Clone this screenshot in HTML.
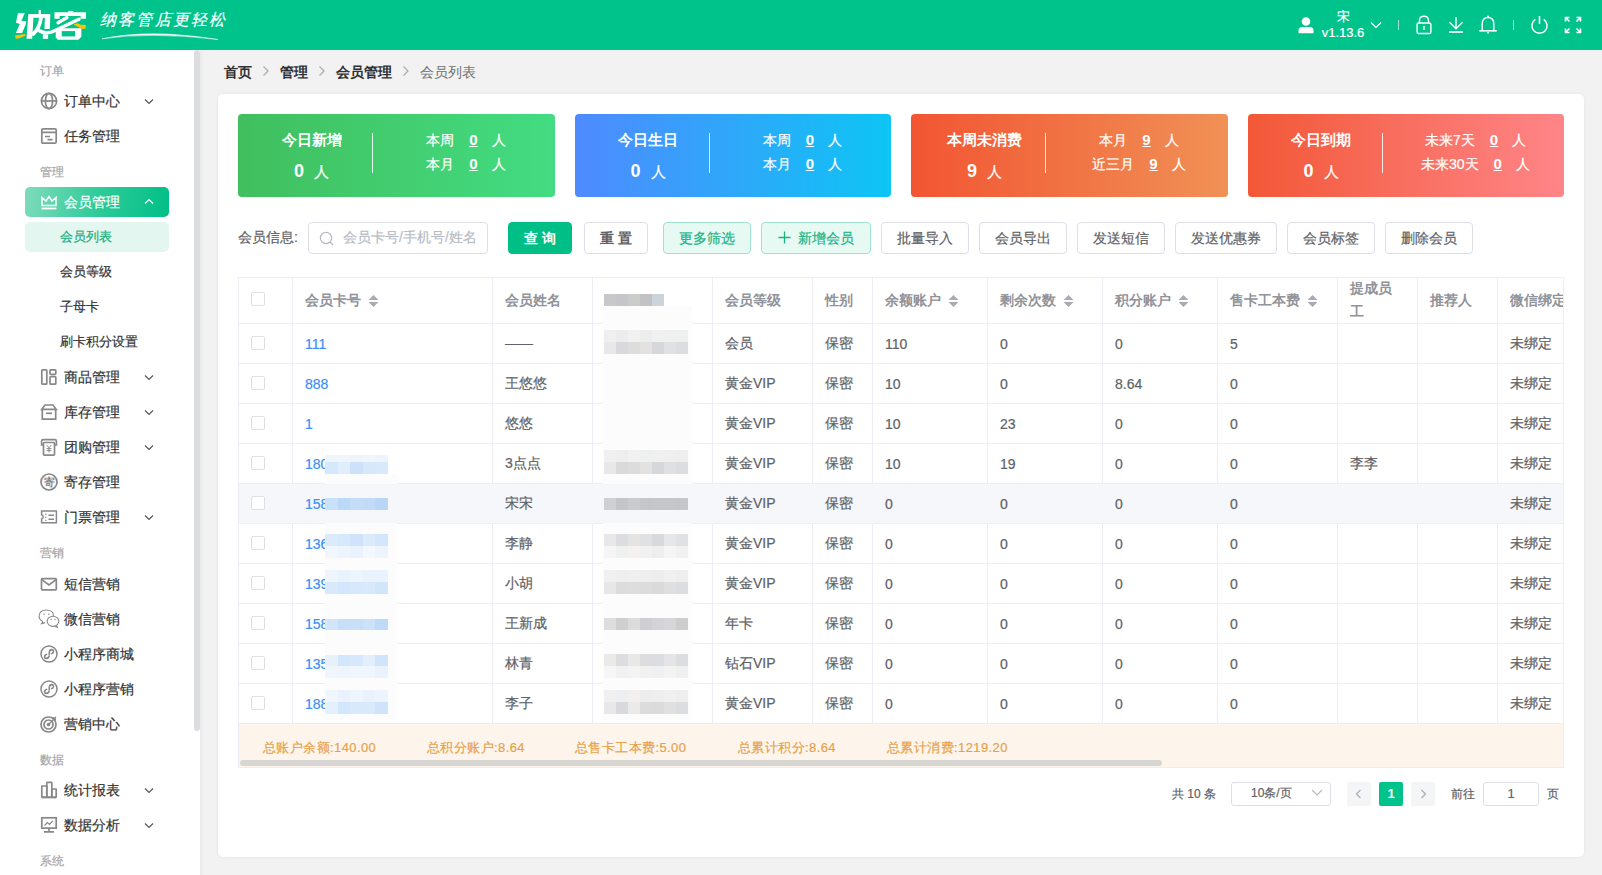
<!DOCTYPE html><html><head><meta charset="utf-8"><title>会员列表</title><style>
*{box-sizing:border-box;margin:0;padding:0}
html,body{width:1602px;height:875px;overflow:hidden}
body{position:relative;background:#f2f2f2;font-family:"Liberation Sans",sans-serif;font-size:14px;color:#333;-webkit-text-stroke:0.2px currentColor}
.a{position:absolute}
[style*="font-weight:bold"],b,.bc,.th{-webkit-text-stroke:0}
.hdr{left:0;top:0;width:1602px;height:50px;background:#00c28b}
.side{left:0;top:50px;width:200px;height:825px;background:#fff}
.thumb{left:194px;top:50px;width:6px;height:681px;background:#dcdde0;border-radius:3px}
.lbl{font-size:12px;color:#a6a6a6;line-height:14px;white-space:nowrap}
.mi{font-size:14px;color:#333;line-height:16px;white-space:nowrap}
.ic{stroke:#888;fill:none;stroke-width:1.7}
.chev{stroke:#555;fill:none;stroke-width:1.2}
.card{left:218px;top:94px;width:1366px;height:763px;background:#fff;border-radius:5px;box-shadow:0 0 4px rgba(0,0,0,.06)}
.stat{top:114px;width:316.5px;height:83px;border-radius:4px;color:#fff}
.bc{top:64px;font-size:14px;line-height:16px;white-space:nowrap;color:#303133;font-weight:bold}
.btn{top:222px;height:32px;border:1px solid #dcdfe6;border-radius:4px;background:#fff;color:#606266;font-size:14px;line-height:30px;text-align:center;white-space:nowrap}
.btng{background:#e7f9f3;border-color:#9ee3cc;color:#18b383}
.tb{left:238px;top:277px;width:1326px;height:491px;border:1px solid #ebeef5;overflow:hidden}
.th{font-size:14px;font-weight:bold;color:#909399;white-space:nowrap;line-height:16px}
.td{font-size:14px;color:#606266;white-space:nowrap;line-height:16px}
.vl{top:0;width:1px;background:#ebeef5}
.hl{left:0;height:1px;background:#ebeef5}
.cb{width:14px;height:14px;border:1px solid #dcdfe6;border-radius:2px;background:#fff}
.link{color:#3d8ff5}
.sum{font-size:13px;color:#e8a14a;white-space:nowrap;line-height:16px;letter-spacing:.4px}
</style></head><body>
<div class="a hdr"></div>
<svg class="a" style="left:10px;top:5px" width="85" height="40" viewBox="0 0 1602 754">
<g fill="#fff">
<polygon points="150,152 278,152 215,300 302,300 300,358 228,528 110,528 185,358 112,335"/>
<polygon points="345,168 760,168 752,452 650,452 656,238 442,238 418,638 310,638"/>
<rect x="540" y="92" width="42" height="160"/>
<rect x="618" y="552" width="100" height="86"/>
<rect x="1100" y="112" width="92" height="60"/>
<polygon points="838,138 1432,138 1432,258 1330,258 1330,205 935,205 935,258 838,258"/>
<polygon points="862,440 1345,440 1345,600 1290,655 900,655 862,610"/>
</g>
<rect x="975" y="492" width="252" height="100" fill="#00c28b"/>
<g fill="none" stroke="#fff" stroke-linecap="round">
<path d="M585 240 Q560 430 440 545" stroke-width="70"/>
<path d="M545 480 Q680 570 850 480 L1300 268" stroke-width="66"/>
<path d="M905 335 L1075 235" stroke-width="62"/>
</g>
<g fill="#f9c20a">
<polygon points="95,575 282,545 292,578 200,618 108,642"/>
<polygon points="1198,368 1268,345 1332,372 1432,378 1422,448 1362,452 1290,420"/>
</g>
</svg>
<div class="a" style="left:100px;top:9px;font-size:16px;line-height:22px;color:#fff;font-family:'Liberation Serif',serif;letter-spacing:2.2px;font-style:italic;white-space:nowrap">纳客管店更轻松</div>
<svg class="a" style="left:100px;top:29px" width="130" height="12"><path d="M2 9.8 Q50 -0.5 118 10.5 Q50 2.6 2 9.8 Z" fill="#fff" stroke="#fff" stroke-width=".5" opacity=".95"/></svg>
<svg class="a" style="left:1297px;top:16px" width="18" height="18"><circle cx="9" cy="5.5" r="4.3" fill="#fff"/><path d="M1.5 17.2 V14.5 Q1.5 11 5 11 H13 Q16.5 11 16.5 14.5 V17.2 Z" fill="#fff"/></svg>
<div class="a" style="left:1320px;top:8.5px;width:46px;text-align:center;color:#fff;font-size:13px;line-height:15px">宋</div>
<div class="a" style="left:1320px;top:25px;width:46px;text-align:center;color:#fff;font-size:13px;line-height:16px">v1.13.6</div>
<svg class="a" style="left:1370px;top:21px" width="12" height="8"><path d="M1 1.5 L6 6.5 L11 1.5" stroke="#fff" stroke-width="1.2" fill="none"/></svg>
<div class="a" style="left:1398px;top:20px;width:1px;height:10px;background:rgba(255,255,255,.6)"></div>
<div class="a" style="left:1513px;top:20px;width:1px;height:10px;background:rgba(255,255,255,.6)"></div>
<svg class="a" style="left:1415px;top:15px" width="18" height="20"><path d="M4.5 8 V5.5 Q4.5 1.3 9 1.3 Q13.5 1.3 13.5 5.5 V8" stroke="#fff" stroke-width="1.4" fill="none"/><rect x="2.1" y="8" width="13.8" height="10.5" rx="1.6" stroke="#fff" stroke-width="1.4" fill="none"/><path d="M9 10.8 V15" stroke="#fff" stroke-width="1.4"/></svg>
<svg class="a" style="left:1448px;top:15px" width="16" height="20"><path d="M8 2 V14 M1.5 7.3 L8 13.8 L14.5 7.3" stroke="#fff" stroke-width="1.4" fill="none"/><path d="M1 17 H15" stroke="#fff" stroke-width="1.6"/></svg>
<svg class="a" style="left:1478px;top:15px" width="20" height="20"><path d="M4.2 15.5 V9 Q4.2 2.5 10 2.5 Q15.8 2.5 15.8 9 V15.5" stroke="#fff" stroke-width="1.4" fill="none"/><path d="M1.3 15.8 H18.7" stroke="#fff" stroke-width="1.6"/><path d="M8.6 17.3 H11.4 L10 19 Z" fill="#fff"/><circle cx="10" cy="1.6" r="1" fill="#fff"/></svg>
<svg class="a" style="left:1530px;top:15px" width="19" height="20"><path d="M5.3 4.3 A7.6 7.6 0 1 0 13.7 4.3" stroke="#fff" stroke-width="1.5" fill="none"/><path d="M9.5 1 V8.8" stroke="#fff" stroke-width="1.6"/></svg>
<svg class="a" style="left:1564px;top:16px" width="18" height="18"><g stroke="#fff" stroke-width="1.6" fill="none"><path d="M1.5 5.5 V1.5 H5.5 M1.5 1.5 L5.5 5.5"/><path d="M16.5 5.5 V1.5 H12.5 M16.5 1.5 L12.5 5.5"/><path d="M1.5 12.5 V16.5 H5.5 M1.5 16.5 L5.5 12.5"/><path d="M16.5 12.5 V16.5 H12.5 M16.5 16.5 L12.5 12.5"/></g></svg>
<div class="a side"></div>
<div class="a thumb"></div>
<div class="a lbl" style="left:40px;top:64px">订单</div>
<svg class="a ic" style="left:40px;top:92px" width="18" height="18" viewBox="0 0 18 18"><circle cx="9" cy="9" r="7.6"/><ellipse cx="9" cy="9" rx="3.6" ry="7.6"/><path d="M1.4 9 H16.6"/></svg>
<div class="a mi" style="left:64px;top:93px">订单中心</div>
<svg class="a" style="left:144px;top:98px" width="10" height="7"><path d="M1 1.5 L5 5.5 L9 1.5" stroke="#555" stroke-width="1.2" fill="none"/></svg>
<svg class="a ic" style="left:40px;top:127px" width="18" height="18" viewBox="0 0 18 18"><rect x="1.8" y="1.8" width="14.4" height="14.4" rx="1.3"/><path d="M1.8 5.3 H16.2 M5 9.5 H10 M7.5 12.7 H12.5"/></svg>
<div class="a mi" style="left:64px;top:128px">任务管理</div>
<div class="a lbl" style="left:40px;top:165px">管理</div>
<div class="a" style="left:25px;top:187px;width:144px;height:30px;border-radius:5px;background:linear-gradient(100deg,#7fdbbb 0%,#2fcb99 50%,#00bf86 100%)"></div>
<svg class="a" style="left:40px;top:193px" width="18" height="18" viewBox="0 0 18 18"><path d="M2 12.5 V4.5 L6 8 L9 3.5 L12 8 L16 4.5 V12.5 Z" stroke="#fff" stroke-width="1.5" fill="none"/><path d="M1.5 15.5 H16.5" stroke="#fff" stroke-width="1.8"/></svg>
<div class="a mi" style="left:64px;top:194px;color:#fff">会员管理</div>
<svg class="a" style="left:144px;top:198px" width="10" height="7"><path d="M1 5.5 L5 1.5 L9 5.5" stroke="#fff" stroke-width="1.2" fill="none"/></svg>
<div class="a" style="left:25px;top:222px;width:144px;height:30px;border-radius:5px;background:#e3f7f0"></div>
<div class="a mi" style="left:60px;top:229px;color:#1aad80;font-size:13px">会员列表</div>
<div class="a mi" style="left:60px;top:264px;font-size:13px">会员等级</div>
<div class="a mi" style="left:60px;top:299px;font-size:13px">子母卡</div>
<div class="a mi" style="left:60px;top:334px;font-size:13px">刷卡积分设置</div>
<svg class="a ic" style="left:40px;top:368px" width="18" height="18" viewBox="0 0 18 18"><rect x="1.8" y="1.8" width="5" height="14.4" rx=".8"/><rect x="10" y="1.8" width="5.8" height="4.5" rx=".8"/><rect x="10" y="8.6" width="5.8" height="7.6" rx=".8"/></svg>
<div class="a mi" style="left:64px;top:369px">商品管理</div>
<svg class="a" style="left:144px;top:374px" width="10" height="7"><path d="M1 1.5 L5 5.5 L9 1.5" stroke="#555" stroke-width="1.2" fill="none"/></svg>
<svg class="a ic" style="left:40px;top:403px" width="18" height="18" viewBox="0 0 18 18"><path d="M1.8 6.3 L5 2 H13 L16.2 6.3 Z"/><path d="M2.3 6.3 V16.2 H15.7 V6.3"/><path d="M6 10.3 H12"/></svg>
<div class="a mi" style="left:64px;top:404px">库存管理</div>
<svg class="a" style="left:144px;top:409px" width="10" height="7"><path d="M1 1.5 L5 5.5 L9 1.5" stroke="#555" stroke-width="1.2" fill="none"/></svg>
<svg class="a ic" style="left:40px;top:438px" width="18" height="18" viewBox="0 0 18 18"><path d="M3.5 7 H1.6 V3.2 Q1.6 1.6 3.2 1.6 H14.8 Q16.4 1.6 16.4 3.2 V7 H14.5"/><rect x="3.5" y="4.5" width="11" height="12.6" rx=".8"/><path d="M6.8 7.2 L9 9.8 L11.2 7.2 M9 9.8 V14.5 M6.6 10.6 H11.4 M6.6 12.6 H11.4" stroke-width="1"/></svg>
<div class="a mi" style="left:64px;top:439px">团购管理</div>
<svg class="a" style="left:144px;top:444px" width="10" height="7"><path d="M1 1.5 L5 5.5 L9 1.5" stroke="#555" stroke-width="1.2" fill="none"/></svg>
<svg class="a ic" style="left:40px;top:473px" width="18" height="18" viewBox="0 0 18 18"><circle cx="9" cy="9" r="8"/></svg>
<div class="a mi" style="left:64px;top:474px">寄存管理</div>
<div class="a" style="left:41px;top:474px;width:16px;text-align:center;font-size:11px;line-height:16px;color:#888;font-weight:bold">寄</div>
<svg class="a ic" style="left:40px;top:508px" width="18" height="18" viewBox="0 0 18 18"><path d="M1.6 3 H16.4 V14.8 H1.6 V11 Q3.2 10.6 3.2 8.9 Q3.2 7.2 1.6 6.8 Z" stroke-width="1.5"/><path d="M5.8 5.5 V6.8 M5.8 8.7 V10 M5.8 11.8 V13.1" stroke-width="1.2"/><path d="M8.5 7.3 H14 M8.5 11.3 H14" stroke-width="1.5"/></svg>
<div class="a mi" style="left:64px;top:509px">门票管理</div>
<svg class="a" style="left:144px;top:514px" width="10" height="7"><path d="M1 1.5 L5 5.5 L9 1.5" stroke="#555" stroke-width="1.2" fill="none"/></svg>
<div class="a lbl" style="left:40px;top:546px">营销</div>
<svg class="a ic" style="left:40px;top:575px" width="18" height="18" viewBox="0 0 18 18"><rect x="1.5" y="3.6" width="14.8" height="11.2" rx=".8"/><path d="M1.8 4.6 L9 10 L16 4.6"/></svg>
<div class="a mi" style="left:64px;top:576px">短信营销</div>
<svg class="a ic" style="left:38px;top:608px" width="22" height="21" viewBox="0 0 22 21"><path d="M5 13.6 Q1.1 11.6 1.1 8.5 Q1.1 2 8.3 2 Q15.5 2 15.5 8 M5 13.6 L3.6 15.6 L7.2 14.6" stroke-width="1.1"/><ellipse cx="15" cy="13.3" rx="5.8" ry="5.1" fill="#fff" stroke-width="1.1"/><path d="M18.6 17.4 L19.3 19.3 L16.6 18.3" stroke-width="1.1"/><g fill="#888" stroke="none"><circle cx="6" cy="6.2" r=".75"/><circle cx="10.8" cy="6.2" r=".75"/><circle cx="13.2" cy="11.5" r=".7"/><circle cx="17" cy="11.5" r=".7"/></g></svg>
<div class="a mi" style="left:64px;top:611px">微信营销</div>
<svg class="a ic" style="left:40px;top:645px" width="18" height="18" viewBox="0 0 18 18"><circle cx="9" cy="9" r="8" stroke-width="1.5"/><path d="M9.3 10.2 V7.2 Q9.5 4.6 11.8 4.6 Q13.7 4.7 13.5 6.7 Q13.2 8.6 11 8.8 M7.2 9.3 Q4.9 9.5 4.6 11.3 Q4.5 13.4 6.3 13.4 Q8.8 13.3 9.1 10.6" stroke-width="1.6"/></svg>
<div class="a mi" style="left:64px;top:646px">小程序商城</div>
<svg class="a ic" style="left:40px;top:680px" width="18" height="18" viewBox="0 0 18 18"><circle cx="9" cy="9" r="8" stroke-width="1.5"/><path d="M9.3 10.2 V7.2 Q9.5 4.6 11.8 4.6 Q13.7 4.7 13.5 6.7 Q13.2 8.6 11 8.8 M7.2 9.3 Q4.9 9.5 4.6 11.3 Q4.5 13.4 6.3 13.4 Q8.8 13.3 9.1 10.6" stroke-width="1.6"/></svg>
<div class="a mi" style="left:64px;top:681px">小程序营销</div>
<svg class="a ic" style="left:40px;top:715px" width="18" height="18" viewBox="0 0 18 18"><circle cx="8.5" cy="9.5" r="7.5"/><circle cx="8.5" cy="9.5" r="4.5"/><circle cx="8.5" cy="9.5" r="1" fill="#888"/><path d="M8.5 9.5 L16 2 M13.5 2 V4.5 H16" stroke-width="1.3"/></svg>
<div class="a mi" style="left:64px;top:716px">营销中心</div>
<div class="a lbl" style="left:40px;top:753px">数据</div>
<svg class="a ic" style="left:40px;top:781px" width="18" height="18" viewBox="0 0 18 18"><path d="M1.8 16.3 H16.2"/><rect x="1.8" y="5" width="5" height="11.3" rx=".5"/><rect x="6.8" y="1.3" width="5" height="15" rx=".5"/><rect x="11.8" y="8" width="4.4" height="8.3" rx=".5"/></svg>
<div class="a mi" style="left:64px;top:782px">统计报表</div>
<svg class="a" style="left:144px;top:787px" width="10" height="7"><path d="M1 1.5 L5 5.5 L9 1.5" stroke="#555" stroke-width="1.2" fill="none"/></svg>
<svg class="a ic" style="left:40px;top:816px" width="18" height="18" viewBox="0 0 18 18"><rect x="1.8" y="1.8" width="14.4" height="10.3"/><path d="M4.5 9.5 L7.3 6.5 L9.5 8.5 L12.8 4.8" stroke-width="1.2"/><path d="M9 12.1 V15.3 M4 15.8 H14"/></svg>
<div class="a mi" style="left:64px;top:817px">数据分析</div>
<svg class="a" style="left:144px;top:822px" width="10" height="7"><path d="M1 1.5 L5 5.5 L9 1.5" stroke="#555" stroke-width="1.2" fill="none"/></svg>
<div class="a lbl" style="left:40px;top:854px">系统</div>
<div class="a" style="left:200px;top:50px;width:4px;height:825px;background:linear-gradient(90deg,rgba(0,0,0,.035),rgba(0,0,0,0))"></div>
<div class="a bc" style="left:224px">首页</div>
<div class="a bc" style="left:280px">管理</div>
<div class="a bc" style="left:336px">会员管理</div>
<svg class="a" style="left:262px;top:65px" width="8" height="12"><path d="M1.5 1.5 L6 6 L1.5 10.5" stroke="#a8abb2" stroke-width="1.2" fill="none"/></svg>
<svg class="a" style="left:318px;top:65px" width="8" height="12"><path d="M1.5 1.5 L6 6 L1.5 10.5" stroke="#a8abb2" stroke-width="1.2" fill="none"/></svg>
<svg class="a" style="left:402px;top:65px" width="8" height="12"><path d="M1.5 1.5 L6 6 L1.5 10.5" stroke="#a8abb2" stroke-width="1.2" fill="none"/></svg>
<div class="a bc" style="left:420px;font-weight:normal;color:#707070">会员列表</div>
<div class="a card"></div>
<div class="a stat" style="left:238px;background:linear-gradient(90deg,#41bf5e,#43dc82)">
<div class="a" style="left:0;width:147px;top:17px;text-align:center;font-size:15px;font-weight:bold;line-height:18px;white-space:nowrap">今日新增</div>
<div class="a" style="left:0;width:147px;top:47px;text-align:center;font-size:15px;line-height:20px;white-space:nowrap"><b style="font-size:18px;margin-right:10px">0</b>人</div>
<div class="a" style="left:134px;top:19px;width:1px;height:40px;background:rgba(255,255,255,.85)"></div>
<div class="a" style="left:128px;width:200px;top:17px;text-align:center;font-size:14px;line-height:18px;white-space:nowrap">本周<u style="font-weight:bold;font-size:15px;margin:0 14px 0 15px">0</u>人</div>
<div class="a" style="left:128px;width:200px;top:41px;text-align:center;font-size:14px;line-height:18px;white-space:nowrap">本月<u style="font-weight:bold;font-size:15px;margin:0 14px 0 15px">0</u>人</div>
</div>
<div class="a stat" style="left:574.5px;background:linear-gradient(90deg,#4f8aff,#0dc5f4)">
<div class="a" style="left:0;width:147px;top:17px;text-align:center;font-size:15px;font-weight:bold;line-height:18px;white-space:nowrap">今日生日</div>
<div class="a" style="left:0;width:147px;top:47px;text-align:center;font-size:15px;line-height:20px;white-space:nowrap"><b style="font-size:18px;margin-right:10px">0</b>人</div>
<div class="a" style="left:134px;top:19px;width:1px;height:40px;background:rgba(255,255,255,.85)"></div>
<div class="a" style="left:128px;width:200px;top:17px;text-align:center;font-size:14px;line-height:18px;white-space:nowrap">本周<u style="font-weight:bold;font-size:15px;margin:0 14px 0 15px">0</u>人</div>
<div class="a" style="left:128px;width:200px;top:41px;text-align:center;font-size:14px;line-height:18px;white-space:nowrap">本月<u style="font-weight:bold;font-size:15px;margin:0 14px 0 15px">0</u>人</div>
</div>
<div class="a stat" style="left:911px;background:linear-gradient(90deg,#f25532,#f09156)">
<div class="a" style="left:0;width:147px;top:17px;text-align:center;font-size:15px;font-weight:bold;line-height:18px;white-space:nowrap">本周未消费</div>
<div class="a" style="left:0;width:147px;top:47px;text-align:center;font-size:15px;line-height:20px;white-space:nowrap"><b style="font-size:18px;margin-right:10px">9</b>人</div>
<div class="a" style="left:134px;top:19px;width:1px;height:40px;background:rgba(255,255,255,.85)"></div>
<div class="a" style="left:128px;width:200px;top:17px;text-align:center;font-size:14px;line-height:18px;white-space:nowrap">本月<u style="font-weight:bold;font-size:15px;margin:0 14px 0 15px">9</u>人</div>
<div class="a" style="left:128px;width:200px;top:41px;text-align:center;font-size:14px;line-height:18px;white-space:nowrap">近三月<u style="font-weight:bold;font-size:15px;margin:0 14px 0 15px">9</u>人</div>
</div>
<div class="a stat" style="left:1247.5px;background:linear-gradient(90deg,#f25837,#ff8588)">
<div class="a" style="left:0;width:147px;top:17px;text-align:center;font-size:15px;font-weight:bold;line-height:18px;white-space:nowrap">今日到期</div>
<div class="a" style="left:0;width:147px;top:47px;text-align:center;font-size:15px;line-height:20px;white-space:nowrap"><b style="font-size:18px;margin-right:10px">0</b>人</div>
<div class="a" style="left:134px;top:19px;width:1px;height:40px;background:rgba(255,255,255,.85)"></div>
<div class="a" style="left:128px;width:200px;top:17px;text-align:center;font-size:14px;line-height:18px;white-space:nowrap">未来7天<u style="font-weight:bold;font-size:15px;margin:0 14px 0 15px">0</u>人</div>
<div class="a" style="left:128px;width:200px;top:41px;text-align:center;font-size:14px;line-height:18px;white-space:nowrap">未来30天<u style="font-weight:bold;font-size:15px;margin:0 14px 0 15px">0</u>人</div>
</div>
<div class="a" style="left:238px;top:229px;font-size:14px;line-height:16px;color:#606266;white-space:nowrap">会员信息:</div>
<div class="a" style="left:308px;top:222px;width:180px;height:32px;border:1px solid #dcdfe6;border-radius:4px;background:#fff"></div>
<svg class="a" style="left:319px;top:231px" width="16" height="16"><circle cx="7" cy="7" r="5.6" stroke="#b4b8bf" stroke-width="1.2" fill="none"/><path d="M11 11 L14 14" stroke="#b4b8bf" stroke-width="1.2"/></svg>
<div class="a" style="left:343px;top:229px;font-size:14px;line-height:16px;color:#b8bcc4;white-space:nowrap">会员卡号/手机号/姓名</div>
<div class="a btn" style="left:508px;width:64px;background:#00bf86;border-color:#00bf86;color:#fff;font-weight:bold">查&nbsp;询</div>
<div class="a btn" style="left:584px;width:64px;font-weight:bold;color:#606266">重&nbsp;置</div>
<div class="a btn btng" style="left:663px;width:88px;">更多筛选</div>
<div class="a btn btng" style="left:761px;width:110px;"><svg width="13" height="13" style="vertical-align:-1px;margin-right:7px"><path d="M6.5 0.5 V12.5 M0.5 6.5 H12.5" stroke="#18b383" stroke-width="1.3"/></svg>新增会员</div>
<div class="a btn" style="left:881px;width:88px;">批量导入</div>
<div class="a btn" style="left:979px;width:88px;">会员导出</div>
<div class="a btn" style="left:1077px;width:88px;">发送短信</div>
<div class="a btn" style="left:1175px;width:102px;">发送优惠券</div>
<div class="a btn" style="left:1287px;width:88px;">会员标签</div>
<div class="a btn" style="left:1385px;width:88px;">删除会员</div>
<div class="a tb">
<div class="a vl" style="left:53px;height:446px"></div>
<div class="a vl" style="left:253px;height:446px"></div>
<div class="a vl" style="left:353px;height:446px"></div>
<div class="a vl" style="left:473px;height:446px"></div>
<div class="a vl" style="left:573px;height:446px"></div>
<div class="a vl" style="left:633px;height:446px"></div>
<div class="a vl" style="left:748px;height:446px"></div>
<div class="a vl" style="left:863px;height:446px"></div>
<div class="a vl" style="left:978px;height:446px"></div>
<div class="a vl" style="left:1098px;height:446px"></div>
<div class="a vl" style="left:1178px;height:446px"></div>
<div class="a vl" style="left:1258px;height:446px"></div>
<div class="a hl" style="top:45px;width:1326px"></div>
<div class="a hl" style="top:85px;width:1326px"></div>
<div class="a hl" style="top:125px;width:1326px"></div>
<div class="a hl" style="top:165px;width:1326px"></div>
<div class="a hl" style="top:205px;width:1326px"></div>
<div class="a hl" style="top:245px;width:1326px"></div>
<div class="a hl" style="top:285px;width:1326px"></div>
<div class="a hl" style="top:325px;width:1326px"></div>
<div class="a hl" style="top:365px;width:1326px"></div>
<div class="a hl" style="top:405px;width:1326px"></div>
<div class="a hl" style="top:445px;width:1326px"></div>
<div class="a" style="left:0;top:206px;width:1326px;height:39px;background:#f5f7fa"></div>
<div class="a" style="left:0;top:446px;width:1326px;height:44px;background:#fdf5ec"></div>
</div>
<div class="a cb" style="left:251px;top:292px"></div>
<div class="a th" style="left:305px;top:292px">会员卡号</div>
<svg class="a" style="left:368px;top:295px" width="11" height="12"><path d="M0.5 5 L5.5 0 L10.5 5 Z M0.5 7 L5.5 12 L10.5 7 Z" fill="#a8abb2"/></svg>
<div class="a th" style="left:505px;top:292px">会员姓名</div>
<div class="a" style="left:604.0px;top:294.0px;width:12.3px;height:12.0px;background:#c8c8c8"></div><div class="a" style="left:616.0px;top:294.0px;width:12.3px;height:12.0px;background:#c5c6c9"></div><div class="a" style="left:628.0px;top:294.0px;width:12.3px;height:12.0px;background:#cbcdcc"></div><div class="a" style="left:640.0px;top:294.0px;width:12.3px;height:12.0px;background:#c2c2c4"></div><div class="a" style="left:652.0px;top:294.0px;width:12.3px;height:12.0px;background:#cdd3db"></div>
<div class="a th" style="left:725px;top:292px">会员等级</div>
<div class="a th" style="left:825px;top:292px">性别</div>
<div class="a th" style="left:885px;top:292px">余额账户</div>
<svg class="a" style="left:948px;top:295px" width="11" height="12"><path d="M0.5 5 L5.5 0 L10.5 5 Z M0.5 7 L5.5 12 L10.5 7 Z" fill="#a8abb2"/></svg>
<div class="a th" style="left:1000px;top:292px">剩余次数</div>
<svg class="a" style="left:1063px;top:295px" width="11" height="12"><path d="M0.5 5 L5.5 0 L10.5 5 Z M0.5 7 L5.5 12 L10.5 7 Z" fill="#a8abb2"/></svg>
<div class="a th" style="left:1115px;top:292px">积分账户</div>
<svg class="a" style="left:1178px;top:295px" width="11" height="12"><path d="M0.5 5 L5.5 0 L10.5 5 Z M0.5 7 L5.5 12 L10.5 7 Z" fill="#a8abb2"/></svg>
<div class="a th" style="left:1230px;top:292px">售卡工本费</div>
<svg class="a" style="left:1307px;top:295px" width="11" height="12"><path d="M0.5 5 L5.5 0 L10.5 5 Z M0.5 7 L5.5 12 L10.5 7 Z" fill="#a8abb2"/></svg>
<div class="a th" style="left:1350px;top:280px">提成员</div>
<div class="a th" style="left:1350px;top:303px">工</div>
<div class="a th" style="left:1430px;top:292px">推荐人</div>
<div class="a" style="left:1510px;top:292px;width:53px;overflow:hidden"><div class="th">微信绑定</div></div>
<div class="a" style="left:603px;top:306px;width:89px;height:414px;background:#fcfcfd"></div>
<div class="a" style="left:603px;top:484px;width:89px;height:39px;background:#f5f7fa"></div>
<div class="a" style="left:325px;top:474px;width:72px;height:246px;background:#fcfcfd"></div>
<div class="a" style="left:325px;top:484px;width:72px;height:39px;background:#f5f7fa"></div>
<div class="a cb" style="left:251px;top:336px"></div>
<div class="a td link" style="left:305px;top:336px">111</div>
<div class="a td" style="left:505px;top:335px">——</div>
<div class="a" style="left:604.0px;top:329.9px;width:12.3px;height:12.1px;background:#efefef"></div><div class="a" style="left:616.0px;top:329.9px;width:12.3px;height:12.1px;background:#ececec"></div><div class="a" style="left:628.0px;top:329.9px;width:12.3px;height:12.1px;background:#f1f1f1"></div><div class="a" style="left:640.0px;top:329.9px;width:12.3px;height:12.1px;background:#eceeed"></div><div class="a" style="left:652.0px;top:329.9px;width:12.3px;height:12.1px;background:#f0f0f0"></div><div class="a" style="left:664.0px;top:329.9px;width:12.3px;height:12.1px;background:#eef0ef"></div><div class="a" style="left:676.0px;top:329.9px;width:12.3px;height:12.1px;background:#eef0ef"></div>
<div class="a" style="left:604.0px;top:342.0px;width:12.3px;height:11.9px;background:#e8e8e8"></div><div class="a" style="left:616.0px;top:342.0px;width:12.3px;height:11.9px;background:#d8d9dc"></div><div class="a" style="left:628.0px;top:342.0px;width:12.3px;height:11.9px;background:#dddddd"></div><div class="a" style="left:640.0px;top:342.0px;width:12.3px;height:11.9px;background:#e4e2e0"></div><div class="a" style="left:652.0px;top:342.0px;width:12.3px;height:11.9px;background:#d6d7da"></div><div class="a" style="left:664.0px;top:342.0px;width:12.3px;height:11.9px;background:#e0e1e3"></div><div class="a" style="left:676.0px;top:342.0px;width:12.3px;height:11.9px;background:#dcdde0"></div>
<div class="a td" style="left:725px;top:335px">会员</div>
<div class="a td" style="left:825px;top:335px">保密</div>
<div class="a td" style="left:885px;top:336px">110</div>
<div class="a td" style="left:1000px;top:336px">0</div>
<div class="a td" style="left:1115px;top:336px">0</div>
<div class="a td" style="left:1230px;top:336px">5</div>
<div class="a td" style="left:1510px;top:335px">未绑定</div>
<div class="a cb" style="left:251px;top:376px"></div>
<div class="a td link" style="left:305px;top:376px">888</div>
<div class="a td" style="left:505px;top:375px">王悠悠</div>
<div class="a td" style="left:725px;top:375px">黄金VIP</div>
<div class="a td" style="left:825px;top:375px">保密</div>
<div class="a td" style="left:885px;top:376px">10</div>
<div class="a td" style="left:1000px;top:376px">0</div>
<div class="a td" style="left:1115px;top:376px">8.64</div>
<div class="a td" style="left:1230px;top:376px">0</div>
<div class="a td" style="left:1510px;top:375px">未绑定</div>
<div class="a cb" style="left:251px;top:416px"></div>
<div class="a td link" style="left:305px;top:416px">1</div>
<div class="a td" style="left:505px;top:415px">悠悠</div>
<div class="a td" style="left:725px;top:415px">黄金VIP</div>
<div class="a td" style="left:825px;top:415px">保密</div>
<div class="a td" style="left:885px;top:416px">10</div>
<div class="a td" style="left:1000px;top:416px">23</div>
<div class="a td" style="left:1115px;top:416px">0</div>
<div class="a td" style="left:1230px;top:416px">0</div>
<div class="a td" style="left:1510px;top:415px">未绑定</div>
<div class="a cb" style="left:251px;top:456px"></div>
<div class="a td link" style="left:305px;top:456px">180</div>
<div class="a" style="left:325.0px;top:455.0px;width:12.9px;height:6.6px;background:#eef5fd"></div><div class="a" style="left:337.6px;top:455.0px;width:12.9px;height:6.6px;background:#f0f6fe"></div><div class="a" style="left:350.2px;top:455.0px;width:12.9px;height:6.6px;background:#edf4fd"></div><div class="a" style="left:362.8px;top:455.0px;width:12.9px;height:6.6px;background:#eff6fe"></div><div class="a" style="left:375.4px;top:455.0px;width:12.9px;height:6.6px;background:#edf4fd"></div>
<div class="a" style="left:325.0px;top:461.6px;width:12.9px;height:12.4px;background:#d6e8fb"></div><div class="a" style="left:337.6px;top:461.6px;width:12.9px;height:12.4px;background:#e0edfc"></div><div class="a" style="left:350.2px;top:461.6px;width:12.9px;height:12.4px;background:#cde2fa"></div><div class="a" style="left:362.8px;top:461.6px;width:12.9px;height:12.4px;background:#d7e8fb"></div><div class="a" style="left:375.4px;top:461.6px;width:12.9px;height:12.4px;background:#d9e9fc"></div>
<div class="a td" style="left:505px;top:455px">3点点</div>
<div class="a" style="left:604.0px;top:450.0px;width:12.3px;height:11.5px;background:#f0f0f0"></div><div class="a" style="left:616.0px;top:450.0px;width:12.3px;height:11.5px;background:#eeeeee"></div><div class="a" style="left:628.0px;top:450.0px;width:12.3px;height:11.5px;background:#f1f1f1"></div><div class="a" style="left:640.0px;top:450.0px;width:12.3px;height:11.5px;background:#eef0ef"></div><div class="a" style="left:652.0px;top:450.0px;width:12.3px;height:11.5px;background:#f0f0f0"></div><div class="a" style="left:664.0px;top:450.0px;width:12.3px;height:11.5px;background:#efefef"></div><div class="a" style="left:676.0px;top:450.0px;width:12.3px;height:11.5px;background:#eeeeee"></div>
<div class="a" style="left:604.0px;top:461.5px;width:12.3px;height:12.5px;background:#e8e8e8"></div><div class="a" style="left:616.0px;top:461.5px;width:12.3px;height:12.5px;background:#d9dadc"></div><div class="a" style="left:628.0px;top:461.5px;width:12.3px;height:12.5px;background:#dcdcdc"></div><div class="a" style="left:640.0px;top:461.5px;width:12.3px;height:12.5px;background:#e3e2e0"></div><div class="a" style="left:652.0px;top:461.5px;width:12.3px;height:12.5px;background:#d6d7da"></div><div class="a" style="left:664.0px;top:461.5px;width:12.3px;height:12.5px;background:#dfe0e2"></div><div class="a" style="left:676.0px;top:461.5px;width:12.3px;height:12.5px;background:#dcdde0"></div>
<div class="a td" style="left:725px;top:455px">黄金VIP</div>
<div class="a td" style="left:825px;top:455px">保密</div>
<div class="a td" style="left:885px;top:456px">10</div>
<div class="a td" style="left:1000px;top:456px">19</div>
<div class="a td" style="left:1115px;top:456px">0</div>
<div class="a td" style="left:1230px;top:456px">0</div>
<div class="a td" style="left:1350px;top:455px">李李</div>
<div class="a td" style="left:1510px;top:455px">未绑定</div>
<div class="a cb" style="left:251px;top:496px"></div>
<div class="a td link" style="left:305px;top:496px">158</div>
<div class="a" style="left:325.0px;top:497.5px;width:12.9px;height:12.8px;background:#c9e0f9"></div><div class="a" style="left:337.6px;top:497.5px;width:12.9px;height:12.8px;background:#bcd8f8"></div><div class="a" style="left:350.2px;top:497.5px;width:12.9px;height:12.8px;background:#c3dcf8"></div><div class="a" style="left:362.8px;top:497.5px;width:12.9px;height:12.8px;background:#c0daf8"></div><div class="a" style="left:375.4px;top:497.5px;width:12.9px;height:12.8px;background:#b9d6f7"></div>
<div class="a td" style="left:505px;top:495px">宋宋</div>
<div class="a" style="left:604.0px;top:498.0px;width:12.3px;height:12.2px;background:#d0d0d2"></div><div class="a" style="left:616.0px;top:498.0px;width:12.3px;height:12.2px;background:#c3c5c8"></div><div class="a" style="left:628.0px;top:498.0px;width:12.3px;height:12.2px;background:#cbcbcd"></div><div class="a" style="left:640.0px;top:498.0px;width:12.3px;height:12.2px;background:#c6c6c8"></div><div class="a" style="left:652.0px;top:498.0px;width:12.3px;height:12.2px;background:#c5c7ca"></div><div class="a" style="left:664.0px;top:498.0px;width:12.3px;height:12.2px;background:#c5c7ca"></div><div class="a" style="left:676.0px;top:498.0px;width:12.3px;height:12.2px;background:#c4c6c9"></div>
<div class="a td" style="left:725px;top:495px">黄金VIP</div>
<div class="a td" style="left:825px;top:495px">保密</div>
<div class="a td" style="left:885px;top:496px">0</div>
<div class="a td" style="left:1000px;top:496px">0</div>
<div class="a td" style="left:1115px;top:496px">0</div>
<div class="a td" style="left:1230px;top:496px">0</div>
<div class="a td" style="left:1510px;top:495px">未绑定</div>
<div class="a cb" style="left:251px;top:536px"></div>
<div class="a td link" style="left:305px;top:536px">136</div>
<div class="a" style="left:325.0px;top:534.3px;width:12.9px;height:11.9px;background:#dcebfc"></div><div class="a" style="left:337.6px;top:534.3px;width:12.9px;height:11.9px;background:#d6e8fb"></div><div class="a" style="left:350.2px;top:534.3px;width:12.9px;height:11.9px;background:#cfe3fa"></div><div class="a" style="left:362.8px;top:534.3px;width:12.9px;height:11.9px;background:#dcebfc"></div><div class="a" style="left:375.4px;top:534.3px;width:12.9px;height:11.9px;background:#d3e6fb"></div>
<div class="a" style="left:325.0px;top:546.2px;width:12.9px;height:11.5px;background:#f1f7fe"></div><div class="a" style="left:337.6px;top:546.2px;width:12.9px;height:11.5px;background:#edf4fd"></div><div class="a" style="left:350.2px;top:546.2px;width:12.9px;height:11.5px;background:#e9f2fd"></div><div class="a" style="left:362.8px;top:546.2px;width:12.9px;height:11.5px;background:#f3f8fe"></div><div class="a" style="left:375.4px;top:546.2px;width:12.9px;height:11.5px;background:#edf4fd"></div>
<div class="a td" style="left:505px;top:535px">李静</div>
<div class="a" style="left:604.0px;top:534.0px;width:12.3px;height:12.0px;background:#e8e8e8"></div><div class="a" style="left:616.0px;top:534.0px;width:12.3px;height:12.0px;background:#dcdde0"></div><div class="a" style="left:628.0px;top:534.0px;width:12.3px;height:12.0px;background:#e5e4e2"></div><div class="a" style="left:640.0px;top:534.0px;width:12.3px;height:12.0px;background:#e0e1e3"></div><div class="a" style="left:652.0px;top:534.0px;width:12.3px;height:12.0px;background:#d8d9dc"></div><div class="a" style="left:664.0px;top:534.0px;width:12.3px;height:12.0px;background:#e6e7e9"></div><div class="a" style="left:676.0px;top:534.0px;width:12.3px;height:12.0px;background:#e0e1e3"></div>
<div class="a" style="left:604.0px;top:546.0px;width:12.3px;height:11.5px;background:#f5f5f5"></div><div class="a" style="left:616.0px;top:546.0px;width:12.3px;height:11.5px;background:#eff0f0"></div><div class="a" style="left:628.0px;top:546.0px;width:12.3px;height:11.5px;background:#f3f2f1"></div><div class="a" style="left:640.0px;top:546.0px;width:12.3px;height:11.5px;background:#f1f1f1"></div><div class="a" style="left:652.0px;top:546.0px;width:12.3px;height:11.5px;background:#eeeeee"></div><div class="a" style="left:664.0px;top:546.0px;width:12.3px;height:11.5px;background:#f5f5f5"></div><div class="a" style="left:676.0px;top:546.0px;width:12.3px;height:11.5px;background:#f1f1f2"></div>
<div class="a td" style="left:725px;top:535px">黄金VIP</div>
<div class="a td" style="left:825px;top:535px">保密</div>
<div class="a td" style="left:885px;top:536px">0</div>
<div class="a td" style="left:1000px;top:536px">0</div>
<div class="a td" style="left:1115px;top:536px">0</div>
<div class="a td" style="left:1230px;top:536px">0</div>
<div class="a td" style="left:1510px;top:535px">未绑定</div>
<div class="a cb" style="left:251px;top:576px"></div>
<div class="a td link" style="left:305px;top:576px">139</div>
<div class="a" style="left:325.0px;top:570.2px;width:12.9px;height:11.6px;background:#eef5fd"></div><div class="a" style="left:337.6px;top:570.2px;width:12.9px;height:11.6px;background:#e9f2fd"></div><div class="a" style="left:350.2px;top:570.2px;width:12.9px;height:11.6px;background:#ecf4fd"></div><div class="a" style="left:362.8px;top:570.2px;width:12.9px;height:11.6px;background:#eaf3fd"></div><div class="a" style="left:375.4px;top:570.2px;width:12.9px;height:11.6px;background:#e9f2fd"></div>
<div class="a" style="left:325.0px;top:581.8px;width:12.9px;height:11.8px;background:#d9e9fc"></div><div class="a" style="left:337.6px;top:581.8px;width:12.9px;height:11.8px;background:#d3e6fb"></div><div class="a" style="left:350.2px;top:581.8px;width:12.9px;height:11.8px;background:#d6e8fb"></div><div class="a" style="left:362.8px;top:581.8px;width:12.9px;height:11.8px;background:#d9e9fc"></div><div class="a" style="left:375.4px;top:581.8px;width:12.9px;height:11.8px;background:#d1e5fb"></div>
<div class="a td" style="left:505px;top:575px">小胡</div>
<div class="a" style="left:604.0px;top:570.3px;width:12.3px;height:11.7px;background:#f0f0f0"></div><div class="a" style="left:616.0px;top:570.3px;width:12.3px;height:11.7px;background:#eeeeee"></div><div class="a" style="left:628.0px;top:570.3px;width:12.3px;height:11.7px;background:#efefef"></div><div class="a" style="left:640.0px;top:570.3px;width:12.3px;height:11.7px;background:#eeeeee"></div><div class="a" style="left:652.0px;top:570.3px;width:12.3px;height:11.7px;background:#ededed"></div><div class="a" style="left:664.0px;top:570.3px;width:12.3px;height:11.7px;background:#f0f0f0"></div><div class="a" style="left:676.0px;top:570.3px;width:12.3px;height:11.7px;background:#eeeeee"></div>
<div class="a" style="left:604.0px;top:582.0px;width:12.3px;height:11.6px;background:#e7e7e7"></div><div class="a" style="left:616.0px;top:582.0px;width:12.3px;height:11.6px;background:#dcdcdc"></div><div class="a" style="left:628.0px;top:582.0px;width:12.3px;height:11.6px;background:#dddddd"></div><div class="a" style="left:640.0px;top:582.0px;width:12.3px;height:11.6px;background:#dcdcdc"></div><div class="a" style="left:652.0px;top:582.0px;width:12.3px;height:11.6px;background:#dadada"></div><div class="a" style="left:664.0px;top:582.0px;width:12.3px;height:11.6px;background:#dedfe0"></div><div class="a" style="left:676.0px;top:582.0px;width:12.3px;height:11.6px;background:#dcdde0"></div>
<div class="a td" style="left:725px;top:575px">黄金VIP</div>
<div class="a td" style="left:825px;top:575px">保密</div>
<div class="a td" style="left:885px;top:576px">0</div>
<div class="a td" style="left:1000px;top:576px">0</div>
<div class="a td" style="left:1115px;top:576px">0</div>
<div class="a td" style="left:1230px;top:576px">0</div>
<div class="a td" style="left:1510px;top:575px">未绑定</div>
<div class="a cb" style="left:251px;top:616px"></div>
<div class="a td link" style="left:305px;top:616px">158</div>
<div class="a" style="left:325.0px;top:618.6px;width:12.9px;height:11.3px;background:#d2e5fa"></div><div class="a" style="left:337.6px;top:618.6px;width:12.9px;height:11.3px;background:#c6def9"></div><div class="a" style="left:350.2px;top:618.6px;width:12.9px;height:11.3px;background:#c8dff9"></div><div class="a" style="left:362.8px;top:618.6px;width:12.9px;height:11.3px;background:#cce1fa"></div><div class="a" style="left:375.4px;top:618.6px;width:12.9px;height:11.3px;background:#bddaf8"></div>
<div class="a td" style="left:505px;top:615px">王新成</div>
<div class="a" style="left:604.0px;top:618.2px;width:12.3px;height:11.8px;background:#dededf"></div><div class="a" style="left:616.0px;top:618.2px;width:12.3px;height:11.8px;background:#cfcfd1"></div><div class="a" style="left:628.0px;top:618.2px;width:12.3px;height:11.8px;background:#dcdbd9"></div><div class="a" style="left:640.0px;top:618.2px;width:12.3px;height:11.8px;background:#cfcfd1"></div><div class="a" style="left:652.0px;top:618.2px;width:12.3px;height:11.8px;background:#d3d4d8"></div><div class="a" style="left:664.0px;top:618.2px;width:12.3px;height:11.8px;background:#d6d6d7"></div><div class="a" style="left:676.0px;top:618.2px;width:12.3px;height:11.8px;background:#cdcdd0"></div>
<div class="a td" style="left:725px;top:615px">年卡</div>
<div class="a td" style="left:825px;top:615px">保密</div>
<div class="a td" style="left:885px;top:616px">0</div>
<div class="a td" style="left:1000px;top:616px">0</div>
<div class="a td" style="left:1115px;top:616px">0</div>
<div class="a td" style="left:1230px;top:616px">0</div>
<div class="a td" style="left:1510px;top:615px">未绑定</div>
<div class="a cb" style="left:251px;top:656px"></div>
<div class="a td link" style="left:305px;top:656px">135</div>
<div class="a" style="left:325.0px;top:654.5px;width:12.9px;height:11.5px;background:#e6f1fd"></div><div class="a" style="left:337.6px;top:654.5px;width:12.9px;height:11.5px;background:#d3e6fb"></div><div class="a" style="left:350.2px;top:654.5px;width:12.9px;height:11.5px;background:#d6e8fb"></div><div class="a" style="left:362.8px;top:654.5px;width:12.9px;height:11.5px;background:#e2eefc"></div><div class="a" style="left:375.4px;top:654.5px;width:12.9px;height:11.5px;background:#d0e4fa"></div>
<div class="a" style="left:325.0px;top:666.0px;width:12.9px;height:12.0px;background:#f0f6fe"></div><div class="a" style="left:337.6px;top:666.0px;width:12.9px;height:12.0px;background:#eef5fd"></div><div class="a" style="left:350.2px;top:666.0px;width:12.9px;height:12.0px;background:#eff6fe"></div><div class="a" style="left:362.8px;top:666.0px;width:12.9px;height:12.0px;background:#f0f6fe"></div><div class="a" style="left:375.4px;top:666.0px;width:12.9px;height:12.0px;background:#eaf3fd"></div>
<div class="a td" style="left:505px;top:655px">林青</div>
<div class="a" style="left:604.0px;top:654.4px;width:12.3px;height:11.6px;background:#eaeae9"></div><div class="a" style="left:616.0px;top:654.4px;width:12.3px;height:11.6px;background:#dcdde0"></div><div class="a" style="left:628.0px;top:654.4px;width:12.3px;height:11.6px;background:#e8e8e6"></div><div class="a" style="left:640.0px;top:654.4px;width:12.3px;height:11.6px;background:#dddde0"></div><div class="a" style="left:652.0px;top:654.4px;width:12.3px;height:11.6px;background:#dcdde2"></div><div class="a" style="left:664.0px;top:654.4px;width:12.3px;height:11.6px;background:#e5e5e5"></div><div class="a" style="left:676.0px;top:654.4px;width:12.3px;height:11.6px;background:#dcdde0"></div>
<div class="a" style="left:604.0px;top:666.0px;width:12.3px;height:11.8px;background:#f6f6f6"></div><div class="a" style="left:616.0px;top:666.0px;width:12.3px;height:11.8px;background:#f1f1f1"></div><div class="a" style="left:628.0px;top:666.0px;width:12.3px;height:11.8px;background:#f3f3f3"></div><div class="a" style="left:640.0px;top:666.0px;width:12.3px;height:11.8px;background:#f1f1f1"></div><div class="a" style="left:652.0px;top:666.0px;width:12.3px;height:11.8px;background:#eff0f2"></div><div class="a" style="left:664.0px;top:666.0px;width:12.3px;height:11.8px;background:#f3f3f3"></div><div class="a" style="left:676.0px;top:666.0px;width:12.3px;height:11.8px;background:#f0f0f0"></div>
<div class="a td" style="left:725px;top:655px">钻石VIP</div>
<div class="a td" style="left:825px;top:655px">保密</div>
<div class="a td" style="left:885px;top:656px">0</div>
<div class="a td" style="left:1000px;top:656px">0</div>
<div class="a td" style="left:1115px;top:656px">0</div>
<div class="a td" style="left:1230px;top:656px">0</div>
<div class="a td" style="left:1510px;top:655px">未绑定</div>
<div class="a cb" style="left:251px;top:696px"></div>
<div class="a td link" style="left:305px;top:696px">188</div>
<div class="a" style="left:325.0px;top:690.4px;width:12.9px;height:11.6px;background:#f0f6fe"></div><div class="a" style="left:337.6px;top:690.4px;width:12.9px;height:11.6px;background:#e9f2fd"></div><div class="a" style="left:350.2px;top:690.4px;width:12.9px;height:11.6px;background:#eef5fd"></div><div class="a" style="left:362.8px;top:690.4px;width:12.9px;height:11.6px;background:#eaf3fd"></div><div class="a" style="left:375.4px;top:690.4px;width:12.9px;height:11.6px;background:#edf4fd"></div>
<div class="a" style="left:325.0px;top:702.0px;width:12.9px;height:12.0px;background:#e5f0fd"></div><div class="a" style="left:337.6px;top:702.0px;width:12.9px;height:12.0px;background:#d3e6fb"></div><div class="a" style="left:350.2px;top:702.0px;width:12.9px;height:12.0px;background:#d8e9fc"></div><div class="a" style="left:362.8px;top:702.0px;width:12.9px;height:12.0px;background:#d9e9fc"></div><div class="a" style="left:375.4px;top:702.0px;width:12.9px;height:12.0px;background:#cfe4fa"></div>
<div class="a td" style="left:505px;top:695px">李子</div>
<div class="a" style="left:604.0px;top:690.0px;width:12.3px;height:12.0px;background:#f0f0f0"></div><div class="a" style="left:616.0px;top:690.0px;width:12.3px;height:12.0px;background:#eceef0"></div><div class="a" style="left:628.0px;top:690.0px;width:12.3px;height:12.0px;background:#f1f0ee"></div><div class="a" style="left:640.0px;top:690.0px;width:12.3px;height:12.0px;background:#ededed"></div><div class="a" style="left:652.0px;top:690.0px;width:12.3px;height:12.0px;background:#eeeeee"></div><div class="a" style="left:664.0px;top:690.0px;width:12.3px;height:12.0px;background:#f0f0f0"></div><div class="a" style="left:676.0px;top:690.0px;width:12.3px;height:12.0px;background:#eeeeee"></div>
<div class="a" style="left:604.0px;top:702.0px;width:12.3px;height:12.0px;background:#e8e8e8"></div><div class="a" style="left:616.0px;top:702.0px;width:12.3px;height:12.0px;background:#d7d9dc"></div><div class="a" style="left:628.0px;top:702.0px;width:12.3px;height:12.0px;background:#ebeae8"></div><div class="a" style="left:640.0px;top:702.0px;width:12.3px;height:12.0px;background:#dcdcdc"></div><div class="a" style="left:652.0px;top:702.0px;width:12.3px;height:12.0px;background:#dadbdd"></div><div class="a" style="left:664.0px;top:702.0px;width:12.3px;height:12.0px;background:#e0e0e0"></div><div class="a" style="left:676.0px;top:702.0px;width:12.3px;height:12.0px;background:#dcdde0"></div>
<div class="a td" style="left:725px;top:695px">黄金VIP</div>
<div class="a td" style="left:825px;top:695px">保密</div>
<div class="a td" style="left:885px;top:696px">0</div>
<div class="a td" style="left:1000px;top:696px">0</div>
<div class="a td" style="left:1115px;top:696px">0</div>
<div class="a td" style="left:1230px;top:696px">0</div>
<div class="a td" style="left:1510px;top:695px">未绑定</div>
<div class="a sum" style="left:263px;top:740px">总账户余额:140.00</div>
<div class="a sum" style="left:427px;top:740px">总积分账户:8.64</div>
<div class="a sum" style="left:575px;top:740px">总售卡工本费:5.00</div>
<div class="a sum" style="left:738px;top:740px">总累计积分:8.64</div>
<div class="a sum" style="left:887px;top:740px">总累计消费:1219.20</div>
<div class="a" style="left:240px;top:760px;width:922px;height:6px;border-radius:3px;background:#d8d6d2"></div>
<div class="a" style="left:1172px;top:787px;font-size:12px;line-height:15px;color:#606266;white-space:nowrap">共 10 条</div>
<div class="a" style="left:1231px;top:782px;width:100px;height:24px;border:1px solid #dcdfe6;border-radius:3px;background:#fff"></div>
<div class="a" style="left:1251px;top:786px;font-size:12px;line-height:15px;color:#606266;white-space:nowrap">10条/页</div>
<svg class="a" style="left:1311px;top:789px" width="12" height="8"><path d="M1 1 L6 6 L11 1" stroke="#b4b8bf" stroke-width="1.1" fill="none"/></svg>
<div class="a" style="left:1347px;top:782px;width:24px;height:24px;background:#f4f5f7;border-radius:2px"></div>
<svg class="a" style="left:1355px;top:789px" width="8" height="10"><path d="M5.5 1 L1.5 5 L5.5 9" stroke="#a8abb2" stroke-width="1.2" fill="none"/></svg>
<div class="a" style="left:1379px;top:782px;width:24px;height:24px;background:#00c28b;border-radius:2px;color:#fff;font-weight:bold;font-size:13px;line-height:24px;text-align:center">1</div>
<div class="a" style="left:1411px;top:782px;width:24px;height:24px;background:#f4f5f7;border-radius:2px"></div>
<svg class="a" style="left:1419px;top:789px" width="8" height="10"><path d="M2.5 1 L6.5 5 L2.5 9" stroke="#a8abb2" stroke-width="1.2" fill="none"/></svg>
<div class="a" style="left:1451px;top:787px;font-size:12px;line-height:15px;color:#606266;white-space:nowrap">前往</div>
<div class="a" style="left:1483px;top:782px;width:56px;height:24px;border:1px solid #dcdfe6;border-radius:3px;background:#fff;text-align:center;font-size:13px;line-height:22px;color:#606266">1</div>
<div class="a" style="left:1547px;top:787px;font-size:12px;line-height:15px;color:#606266;white-space:nowrap">页</div>
</body></html>
